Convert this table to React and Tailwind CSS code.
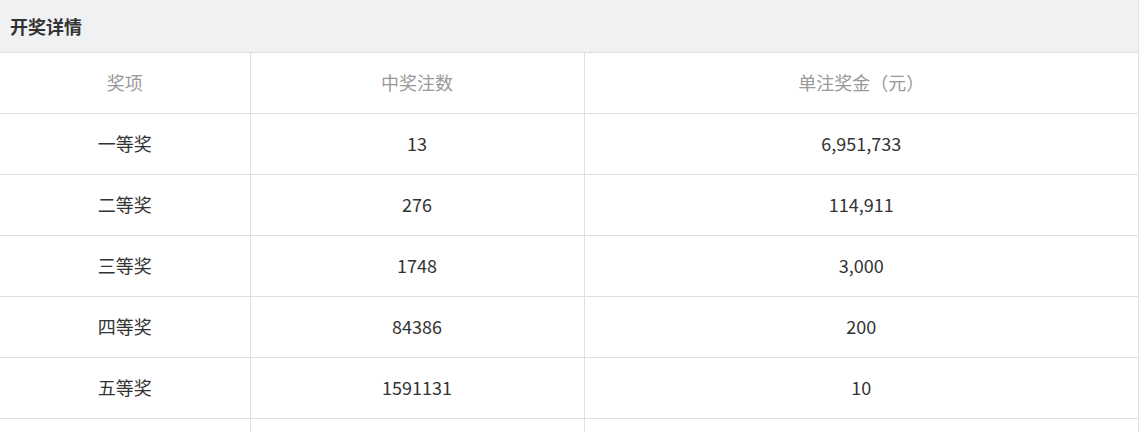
import React from 'react';

const rows = [
  { name: '一等奖', count: '13', money: '6,951,733' },
  { name: '二等奖', count: '276', money: '114,911' },
  { name: '三等奖', count: '1748', money: '3,000' },
  { name: '四等奖', count: '84386', money: '200' },
  { name: '五等奖', count: '1591131', money: '10' },
  { name: '', count: '', money: '' },
];

const App = () => {
  return (
    <div
      className="w-[1139px] h-[432px] overflow-hidden bg-white"
      style={{ fontFamily: '"Microsoft YaHei", "Noto Sans CJK SC", sans-serif' }}
    >
      <div className="w-[1139px] border-r border-[#dde3ea]">
        {/* Title bar */}
        <div className="h-[53px] bg-[#f0f1f3] border-b border-[#e0e0e0] flex items-center px-[10px]">
          <h3 className="text-[18px] font-bold text-[#333]">开奖详情</h3>
        </div>

        {/* Table */}
        <table className="w-full border-collapse table-fixed">
          <colgroup>
            <col className="w-[250px]" />
            <col className="w-[334px]" />
            <col />
          </colgroup>
          <thead>
            <tr className="h-[60px] border-b border-[#e0e0e0]">
              <th className="p-0 font-normal text-[18px] text-[#999] border-r border-[#e0e0e0]">奖项</th>
              <th className="p-0 font-normal text-[18px] text-[#999] border-r border-[#e0e0e0]">中奖注数</th>
              <th className="p-0 font-normal text-[18px] text-[#999]">单注奖金（元）</th>
            </tr>
          </thead>
          <tbody>
            {rows.map((r, i) => (
              <tr key={i} className="h-[61px] border-b border-[#e0e0e0]">
                <td className="p-0 text-center text-[18px] text-[#333] border-r border-[#e0e0e0]">{r.name}</td>
                <td className="p-0 text-center text-[18px] text-[#333] border-r border-[#e0e0e0]">{r.count}</td>
                <td className="p-0 text-center text-[18px] text-[#333]">{r.money}</td>
              </tr>
            ))}
          </tbody>
        </table>
      </div>
    </div>
  );
};

export default App;
